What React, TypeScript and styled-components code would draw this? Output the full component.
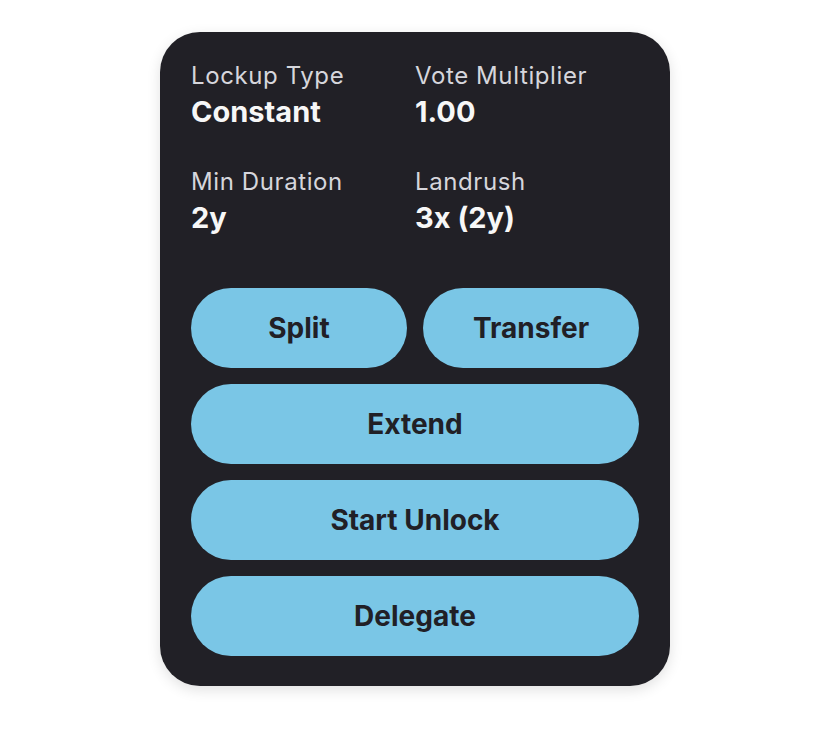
import React from "react";
import styled, { createGlobalStyle } from "styled-components";

const Global = createGlobalStyle`
  html, body { margin: 0; padding: 0; background: #ffffff; }
  body { font-family: Inter, "Noto Sans", sans-serif; -webkit-font-smoothing: antialiased; }
`;

const Page = styled.div`
  width: 830px;
  min-height: 734px;
  display: flex;
  justify-content: center;
  padding-top: 32px;
  box-sizing: border-box;
`;

const Card = styled.div`
  width: 510px;
  height: 654px;
  box-sizing: border-box;
  padding: 28px 31px 30px;
  background: #212026;
  border-radius: 40px;
  box-shadow: 0 4px 14px rgba(0, 0, 0, 0.12);
  display: flex;
  flex-direction: column;
`;

const Stats = styled.div`
  display: grid;
  grid-template-columns: 1fr 1fr;
  row-gap: 34px;
`;

const Stat = styled.div`
  display: flex;
  flex-direction: column;
`;

const Label = styled.div`
  font-size: 24px;
  line-height: 32px;
  letter-spacing: 0.025em;
  color: #d6d6dc;
`;

const Value = styled.div`
  font-size: 29px;
  line-height: 40px;
  font-weight: 700;
  color: #f7f7f7;
`;

const Actions = styled.div`
  margin-top: auto;
  display: flex;
  flex-direction: column;
  gap: 16px;
`;

const Row = styled.div`
  display: grid;
  grid-template-columns: 1fr 1fr;
  gap: 16px;
`;

const Button = styled.button`
  height: 80px;
  border: none;
  border-radius: 40px;
  background: #7ac6e6;
  color: #212026;
  font-family: Inter, "Noto Sans", sans-serif;
  font-size: 28px;
  font-weight: 700;
  cursor: pointer;
  width: 100%;
  padding: 0;
`;

const stats = [
  { label: "Lockup Type", value: "Constant" },
  { label: "Vote Multiplier", value: "1.00" },
  { label: "Min Duration", value: "2y" },
  { label: "Landrush", value: "3x (2y)" },
];

export default function App() {
  return (
    <>
      <Global />
      <Page>
        <Card>
          <Stats>
            {stats.map((s) => (
              <Stat key={s.label}>
                <Label>{s.label}</Label>
                <Value>{s.value}</Value>
              </Stat>
            ))}
          </Stats>
          <Actions>
            <Row>
              <Button>Split</Button>
              <Button>Transfer</Button>
            </Row>
            <Button>Extend</Button>
            <Button>Start Unlock</Button>
            <Button>Delegate</Button>
          </Actions>
        </Card>
      </Page>
    </>
  );
}
